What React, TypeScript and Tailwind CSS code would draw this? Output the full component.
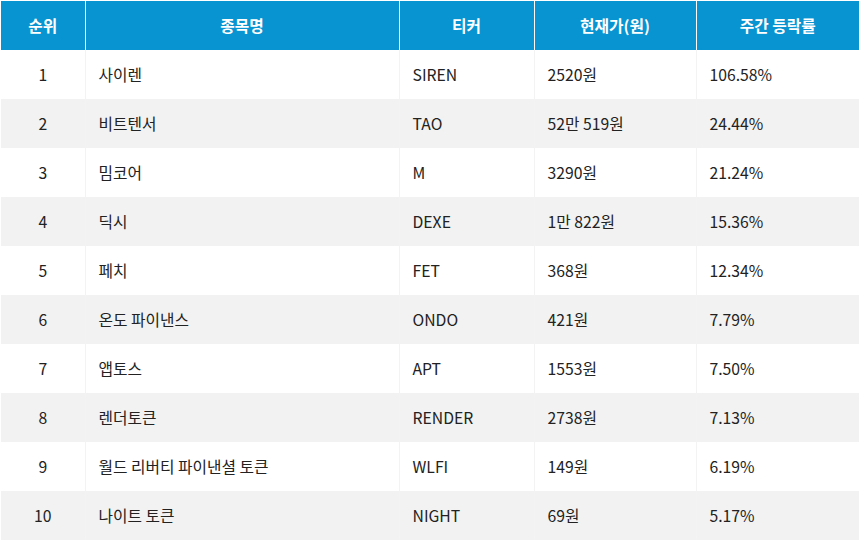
import React from 'react';

const rows = [
    ['1', '사이렌', 'SIREN', '2520원', '106.58%'],
    ['2', '비트텐서', 'TAO', '52만 519원', '24.44%'],
    ['3', '밈코어', 'M', '3290원', '21.24%'],
    ['4', '딕시', 'DEXE', '1만 822원', '15.36%'],
    ['5', '페치', 'FET', '368원', '12.34%'],
    ['6', '온도 파이낸스', 'ONDO', '421원', '7.79%'],
    ['7', '앱토스', 'APT', '1553원', '7.50%'],
    ['8', '렌더토큰', 'RENDER', '2738원', '7.13%'],
    ['9', '월드 리버티 파이낸셜 토큰', 'WLFI', '149원', '6.19%'],
    ['10', '나이트 토큰', 'NIGHT', '69원', '5.17%'],
];

export default function App() {
    return (
        <div className="w-[860px] h-[540px] bg-white pl-px pt-px overflow-hidden font-['Noto_Sans_CJK_KR','Noto_Sans',sans-serif] text-[15.75px] text-[#222]">
            <table className="w-[858px] border-collapse table-fixed">
                <colgroup>
                    <col className="w-[84px]" />
                    <col className="w-[314px]" />
                    <col className="w-[135px]" />
                    <col className="w-[162px]" />
                    <col className="w-[163px]" />
                </colgroup>
                <thead>
                    <tr className="h-[49px] bg-[#0893d1] text-white font-bold">
                        <th className="border-r border-white">순위</th>
                        <th className="border-r border-white">종목명</th>
                        <th className="border-r border-white">티커</th>
                        <th className="border-r border-white">현재가(원)</th>
                        <th>주간 등락률</th>
                    </tr>
                </thead>
                <tbody>
                    {rows.map((r, i) => (
                        <tr key={r[0]} className={`h-[49px] ${i % 2 === 1 ? 'bg-[#f2f2f2]' : 'bg-white'}`}>
                            <td className="text-center border-r border-[#f3f3f3]">{r[0]}</td>
                            <td className="pl-[13px] border-r border-[#f3f3f3]">{r[1]}</td>
                            <td className="pl-[13px] border-r border-[#f3f3f3]">{r[2]}</td>
                            <td className="pl-[13px] border-r border-[#f3f3f3]">{r[3]}</td>
                            <td className="pl-[13px]">{r[4]}</td>
                        </tr>
                    ))}
                </tbody>
            </table>
        </div>
    );
}
